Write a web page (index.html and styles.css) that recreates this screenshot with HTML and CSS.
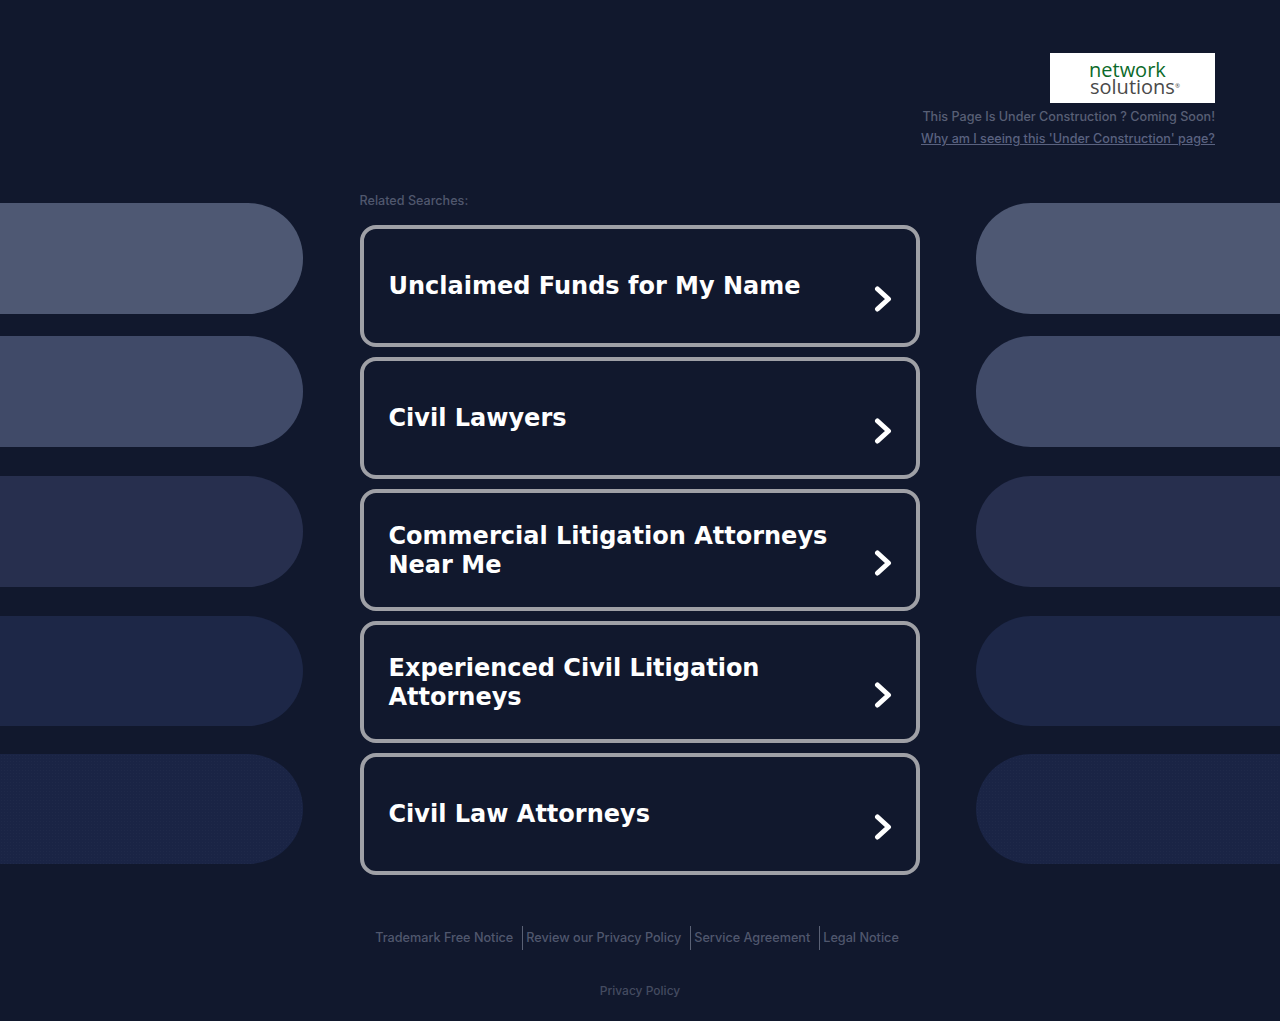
FILE: index.html
```html
<!DOCTYPE html>
<html lang="en">
<head>
<meta charset="utf-8">
<title>Under Construction</title>
<link rel="stylesheet" href="styles.css">
</head>
<body>
<header class="top">
  <svg class="logo" viewBox="0 0 165 50" role="img" aria-label="network solutions">
    <text class="logo-text"><tspan class="logo-net" x="39" y="24">network</tspan><tspan class="logo-sol" x="40" y="41">solutions</tspan><tspan class="logo-reg" x="125" y="35">®</tspan></text>
  </svg>
  <p class="notice">This Page Is Under Construction ? Coming Soon!</p>
  <a class="why" href="#">Why am I seeing this 'Under Construction' page?</a>
</header>
<main class="stage">
  <aside class="pills pills-left">
    <div class="pill p1"></div><div class="pill p2"></div><div class="pill p3"></div><div class="pill p4"></div><div class="pill p5"></div>
  </aside>
  <section class="center">
    <h2 class="related">Related Searches:</h2>
    <a class="card" href="#"><span class="card-title">Unclaimed Funds for My Name</span><svg class="chev" viewBox="0 0 18 26"><path d="M3.5 3 14.5 13 3.5 23"/></svg></a>
    <a class="card" href="#"><span class="card-title">Civil Lawyers</span><svg class="chev" viewBox="0 0 18 26"><path d="M3.5 3 14.5 13 3.5 23"/></svg></a>
    <a class="card" href="#"><span class="card-title">Commercial Litigation Attorneys Near Me</span><svg class="chev" viewBox="0 0 18 26"><path d="M3.5 3 14.5 13 3.5 23"/></svg></a>
    <a class="card" href="#"><span class="card-title">Experienced Civil Litigation Attorneys</span><svg class="chev" viewBox="0 0 18 26"><path d="M3.5 3 14.5 13 3.5 23"/></svg></a>
    <a class="card" href="#"><span class="card-title">Civil Law Attorneys</span><svg class="chev" viewBox="0 0 18 26"><path d="M3.5 3 14.5 13 3.5 23"/></svg></a>
  </section>
  <aside class="pills pills-right">
    <div class="pill p1"></div><div class="pill p2"></div><div class="pill p3"></div><div class="pill p4"></div><div class="pill p5"></div>
  </aside>
</main>
<footer class="foot">
  <nav class="foot-links">
    <a class="foot-link" href="#">Trademark Free Notice</a>
    <a class="foot-link" href="#">Review our Privacy Policy</a>
    <a class="foot-link" href="#">Service Agreement</a>
    <a class="foot-link" href="#">Legal Notice</a>
  </nav>
  <a class="foot-privacy" href="#">Privacy Policy</a>
</footer>
</body>
</html>
```
FILE: styles.css
```css
* { box-sizing: border-box; }
html, body { margin: 0; padding: 0; }
body {
  width: 1280px;
  height: 1021px;
  overflow: hidden;
  background: #11182d;
  font-family: "Inter", sans-serif;
  font-weight: 500;
  font-size: 12.6px;
  color: #585f75;
}
a { color: inherit; }

.top {
  display: flex;
  flex-direction: column;
  align-items: flex-end;
  padding: 53px 65px 0 0;
  height: 203px;
}
.logo {
  display: block;
  width: 165px;
  height: 50px;
  background: #fff;
  font-family: "Open Sans", sans-serif;
  font-weight: 400;
  font-size: 20px;
}
.logo-net { fill: #0b6a2a; }
.logo-sol { fill: #4a4a4a; }
.logo-reg { fill: #4a4a4a; font-size: 6px; }
.notice {
  margin: 7px 0 0;
  line-height: 14px;
  white-space: nowrap;
}
.why {
  margin-top: 8px;
  line-height: 14px;
  white-space: nowrap;
  color: #5a6280;
}

.stage {
  display: grid;
  grid-template-columns: 303px 560px 304px;
  justify-content: space-between;
  column-gap: 56px;
}
.pills { display: flex; flex-direction: column; }
.pill { height: 111px; }
.pills-left .pill { border-radius: 0 55px 55px 0; }
.pills-right .pill { border-radius: 55px 0 0 55px; }
.p1 { background: #4e5873; }
.p2 { margin-top: 22px; background: #404a68; }
.p3 { margin-top: 29px; background: #272f4e; }
.p4 { margin-top: 29px; height: 110px; background: #1d2747; }
.p5 {
  margin-top: 28px;
  height: 110px;
  background: #1a2445 radial-gradient(#ffffff06 1px, transparent 1px) 0 0 / 3px 3px;
}

.center { display: flex; flex-direction: column; gap: 10px; }
.related {
  margin: -9px 0 7px;
  font-size: inherit;
  font-weight: inherit;
  line-height: 14px;
  color: #50576d;
}
.card {
  display: flex;
  justify-content: space-between;
  align-items: center;
  height: 122px;
  padding: 0 24px 0 25px;
  border: 4px solid #9fa0a6;
  border-radius: 16px;
  color: #fff;
  text-decoration: none;
}
.card-title {
  width: 470px;
  font-family: "DejaVu Sans", sans-serif;
  font-size: 24px;
  font-weight: 700;
  line-height: 29px;
  margin-top: 1px;
}
.chev {
  width: 18px;
  height: 26px;
  margin-top: 26px;
  fill: none;
  stroke: #fff;
  stroke-width: 5;
  stroke-linecap: round;
  stroke-linejoin: round;
}

.foot {
  display: flex;
  flex-direction: column;
  align-items: center;
  padding-top: 51px;
  color: #50576d;
}
.foot-links { display: flex; font-size: 12.65px; }
.foot-link {
  padding: 0 9px 0 3px;
  line-height: 24px;
  text-decoration: none;
  border-right: 1px solid #5a6175;
}
.foot-link:last-child { border-right: 0; }
.foot-privacy {
  margin-top: 34px;
  font-size: 12px;
  line-height: 14px;
  text-decoration: none;
  color: #444b60;
}
```
